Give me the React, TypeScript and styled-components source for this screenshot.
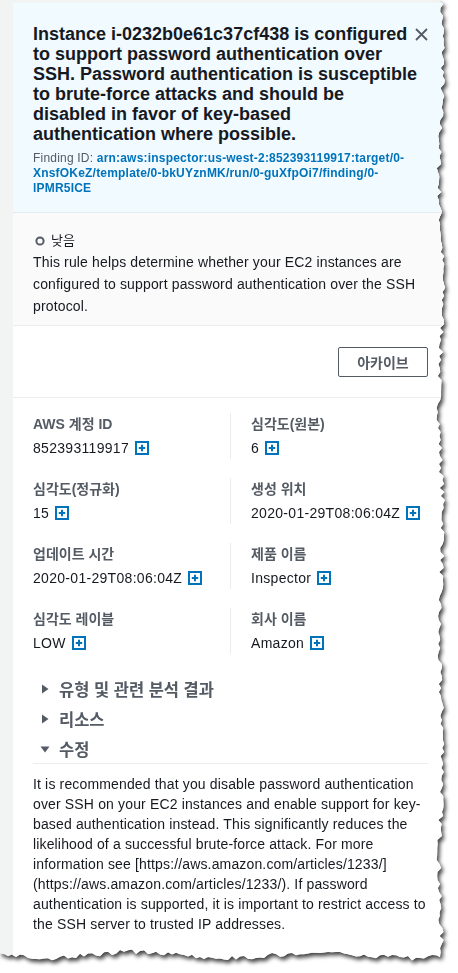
import React from 'react';
import styled, { createGlobalStyle } from 'styled-components';

const GlobalStyle = createGlobalStyle`
  html, body {
    margin: 0;
    padding: 0;
    background: #ffffff;
  }
  * {
    box-sizing: border-box;
  }
`;

const FONT = `"Liberation Sans", "Noto Sans CJK KR", Arial, sans-serif`;

// torn paper edge on the right and bottom
const tornEdge = (() => {
  let seed = 7;
  const rand = () => {
    seed = (seed * 16807) % 2147483647;
    return (seed - 1) / 2147483646;
  };
  const pts: string[] = ['0px 0px'];
  for (let y = 0; y <= 952; y += 4) {
    const x = 441 + Math.sin(y / 37) * 2 + (rand() - 0.5) * 5;
    pts.push(`${x.toFixed(1)}px ${y}px`);
  }
  for (let x = 440; x >= 0; x -= 4) {
    const y = 955 + Math.sin(x / 29) * 3 + (rand() - 0.5) * 5;
    pts.push(`${x}px ${y.toFixed(1)}px`);
  }
  return `polygon(${pts.join(', ')})`;
})();

const Sheet = styled.div`
  width: 458px;
  height: 973px;
  filter: drop-shadow(2px 3px 2px rgba(0, 0, 0, 0.75));
`;

const Torn = styled.div`
  width: 452px;
  height: 966px;
  background: #f2f3f3;
  padding: 3px 0 0 13px;
  overflow: hidden;
  clip-path: ${tornEdge};
`;

const Panel = styled.div`
  width: 435px;
  min-height: 100%;
  background: #ffffff;
  font-family: ${FONT};
  color: #16191f;
`;

const Header = styled.div`
  display: flex;
  flex-direction: column;
  gap: 7px;
  background: #f1faff;
  border-bottom: 1px solid #e4ecf2;
  padding: 21px 20px 16px 20px;
`;

const TitleRow = styled.div`
  display: flex;
  align-items: flex-start;
  justify-content: space-between;
  gap: 8px;
`;

const Title = styled.h2`
  margin: 0;
  flex: 1;
  min-width: 0;
  font-size: 18px;
  line-height: 20px;
  font-weight: 700;
  color: #16191f;
`;

const TitleLine = styled.span`
  display: block;
  white-space: nowrap;
`;

const CloseButton = styled.button`
  border: none;
  background: none;
  padding: 0;
  margin: 4px 0 0 0;
  width: 13px;
  height: 13px;
  flex-shrink: 0;
  display: flex;
  cursor: pointer;
`;

const FindingLine = styled.div`
  font-size: 12px;
  line-height: 15px;
  color: #545b64;
  letter-spacing: 0.2px;
`;

const FindingLink = styled.a`
  color: #0073bb;
  font-weight: 700;
  text-decoration: none;
`;

const SeveritySection = styled.div`
  background: #fafafa;
  border-bottom: 1px solid #eaeded;
  padding: 18px 20px 8px 20px;
`;

const SeverityBadge = styled.div`
  display: flex;
  align-items: center;
  gap: 6px;
  font-size: 13px;
  line-height: 20px;
  color: #16191f;
  padding-left: 2px;
`;

const BodyText = styled.p<{ $lh?: number }>`
  margin: 0;
  font-size: 14px;
  line-height: ${p => p.$lh ?? 20}px;
  letter-spacing: 0.15px;
  color: #16191f;
`;

const ActionBar = styled.div`
  display: flex;
  justify-content: flex-end;
  padding: 21px 20px 20px 20px;
  border-bottom: 1px solid #eaeded;
`;

const ArchiveButton = styled.button`
  width: 90px;
  height: 30px;
  background: #ffffff;
  border: 1px solid #545b64;
  border-radius: 2px;
  font-family: ${FONT};
  font-size: 14px;
  font-weight: 700;
  color: #545b64;
  cursor: pointer;
`;

const Grid = styled.div`
  display: grid;
  grid-template-columns: 197px 1fr;
  row-gap: 19px;
  padding: 15px 20px 0 20px;
`;

const Cell = styled.div<{ $right?: boolean }>`
  display: flex;
  flex-direction: column;
  gap: 2px;
  padding-left: ${p => (p.$right ? '20px' : '0')};
  border-left: ${p => (p.$right ? '1px solid #eaeded' : 'none')};
`;

const Label = styled.div`
  font-size: 14px;
  line-height: 22px;
  font-weight: 700;
  color: #545b64;
`;

const Value = styled.div`
  display: flex;
  align-items: center;
  gap: 6px;
  font-size: 14px;
  line-height: 22px;
  letter-spacing: 0.3px;
  color: #16191f;
`;

const Sections = styled.div`
  display: flex;
  flex-direction: column;
  padding: 20px 20px 0 20px;
`;

const SectionHead = styled.div<{ $last?: boolean }>`
  display: flex;
  align-items: center;
  gap: 9px;
  height: 30px;
  padding-left: 7px;
  font-size: 16.5px;
  font-weight: 700;
  color: #545b64;
  border-bottom: ${p => (p.$last ? '1px solid #eaeded' : 'none')};
`;

const SectionBody = styled.div`
  padding: 10px 0 0 0;
`;

const PlusIcon = () => (
  <svg width="14" height="14" viewBox="0 0 14 14">
    <rect x="1" y="1" width="12" height="12" fill="#ffffff" stroke="#0073bb" strokeWidth="2" />
    <path d="M7 3.8v6.4M3.8 7h6.4" stroke="#0073bb" strokeWidth="2" />
  </svg>
);

const Caret = ({ open }: { open?: boolean }) => (
  <svg width="10" height="10" viewBox="0 0 10 10">
    {open ? (
      <path d="M0.5 2.5h9L5 8.5z" fill="#545b64" />
    ) : (
      <path d="M2 0.5v9L8.5 5z" fill="#545b64" />
    )}
  </svg>
);

const titleLines = [
  'Instance i-0232b0e61c37cf438 is configured',
  'to support password authentication over',
  'SSH. Password authentication is susceptible',
  'to brute-force attacks and should be',
  'disabled in favor of key-based',
  'authentication where possible.',
];

const fields: { label: string; value: string }[] = [
  { label: 'AWS 계정 ID', value: '852393119917' },
  { label: '심각도(원본)', value: '6' },
  { label: '심각도(정규화)', value: '15' },
  { label: '생성 위치', value: '2020-01-29T08:06:04Z' },
  { label: '업데이트 시간', value: '2020-01-29T08:06:04Z' },
  { label: '제품 이름', value: 'Inspector' },
  { label: '심각도 레이블', value: 'LOW' },
  { label: '회사 이름', value: 'Amazon' },
];

const App: React.FC = () => {
  return (
    <>
      <GlobalStyle />
      <Sheet>
        <Torn>
          <Panel>
            {/* Header */}
            <Header>
              <TitleRow>
                <Title>
                  {titleLines.map(line => (
                    <TitleLine key={line}>{line}</TitleLine>
                  ))}
                </Title>
                <CloseButton aria-label="close">
                  <svg width="13" height="13" viewBox="0 0 13 13">
                    <path d="M1 1l11 11M12 1L1 12" stroke="#545b64" strokeWidth="1.8" />
                  </svg>
                </CloseButton>
              </TitleRow>
              <FindingLine>
                Finding ID:{' '}
                <FindingLink href="#">
                  arn:aws:inspector:us-west-2:852393119917:target/0-XnsfOKeZ/template/0-bkUYznMK/run/0-guXfpOi7/finding/0-lPMR5ICE
                </FindingLink>
              </FindingLine>
            </Header>

            {/* Severity */}
            <SeveritySection>
              <SeverityBadge>
                <svg width="10" height="10" viewBox="0 0 10 10">
                  <circle cx="5" cy="5" r="3.6" fill="#ffffff" stroke="#545b64" strokeWidth="2" />
                </svg>
                낮음
              </SeverityBadge>
              <BodyText $lh={22}>
                This rule helps determine whether your EC2 instances are configured to support password authentication
                over the SSH protocol.
              </BodyText>
            </SeveritySection>

            <ActionBar>
              <ArchiveButton>아카이브</ArchiveButton>
            </ActionBar>

            {/* Details */}
            <Grid>
              {fields.map((f, i) => (
                <Cell key={f.label} $right={i % 2 === 1}>
                  <Label>{f.label}</Label>
                  <Value>
                    {f.value}
                    <PlusIcon />
                  </Value>
                </Cell>
              ))}
            </Grid>

            <Sections>
              <SectionHead>
                <Caret />
                유형 및 관련 분석 결과
              </SectionHead>
              <SectionHead>
                <Caret />
                리소스
              </SectionHead>
              <SectionHead $last>
                <Caret open />
                수정
              </SectionHead>
              <SectionBody>
                <BodyText>
                  It is recommended that you disable password authentication over SSH on your EC2 instances and enable
                  support for key-based authentication instead. This significantly reduces the likelihood of a
                  successful brute-force attack. For more information see [https://aws.amazon.com/articles/1233/]
                  (https://aws.amazon.com/articles/1233/). If password authentication is supported, it is important to
                  restrict access to the SSH server to trusted IP addresses.
                </BodyText>
              </SectionBody>
            </Sections>
          </Panel>
        </Torn>
      </Sheet>
    </>
  );
};

export default App;
